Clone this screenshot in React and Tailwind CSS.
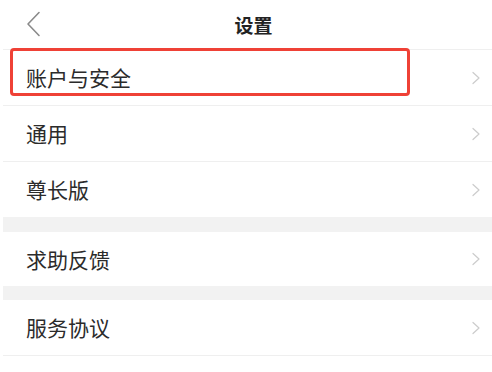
import React from 'react';

const font = { fontFamily: '"Noto Sans CJK SC", "Noto Sans", sans-serif' };

function Chevron() {
  return (
    <svg width="10" height="14" viewBox="0 0 10 14" fill="none" className="shrink-0">
      <path d="M2 1.5 L8 7 L2 12.5" stroke="#cccccc" strokeWidth="1.2" strokeLinecap="round" strokeLinejoin="round" />
    </svg>
  );
}

function Row({ label, h = 'h-[56px]', last }) {
  return (
    <div className={`flex items-center justify-between pl-[23px] pr-[11px] ${h} ${last ? '' : 'border-b border-[#efefef]'}`}>
      <span className="text-[21px] text-[#2b2b2b] leading-none">{label}</span>
      <Chevron />
    </div>
  );
}

export default function App() {
  return (
    <div className="relative w-[492px] h-[372px] bg-white overflow-hidden" style={font}>
      <div className="flex items-center justify-center relative h-[50px] border-b border-[#efefef] ml-[3px]">
        <svg width="16" height="26" viewBox="0 0 16 26" fill="none" className="absolute left-[22px] top-[11px]">
          <path d="M14 1.5 L3 13 L14 24.5" stroke="#8a8a8a" strokeWidth="1.6" strokeLinecap="round" strokeLinejoin="round" />
        </svg>
        <span className="text-[19px] font-bold text-[#222] mt-[1px] ml-[12px]">设置</span>
      </div>
      <div className="ml-[3px]">
        <Row label="账户与安全" />
        <Row label="通用" />
        <Row label="尊长版" h="h-[55px]" last />
        <div className="h-[15px] bg-[#f2f2f2]" />
        <Row label="求助反馈" h="h-[54px]" last />
        <div className="h-[14px] bg-[#f2f2f2]" />
        <Row label="服务协议" />
      </div>
      <div className="absolute left-[10px] top-[48px] w-[400px] h-[48px] border-[3px] border-[#ef4136] rounded-[4px]" />
    </div>
  );
}
